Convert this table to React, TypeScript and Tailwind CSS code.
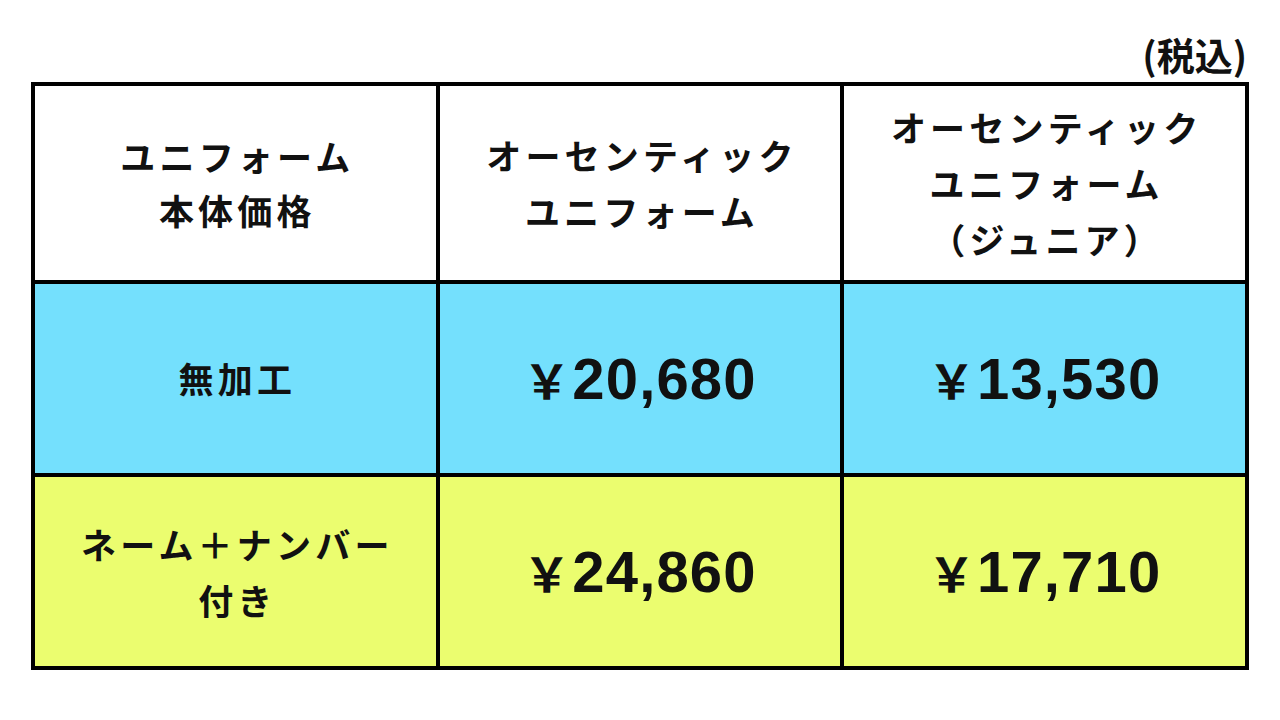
export default function App() {
  const font = { fontFamily: '"Noto Sans CJK JP", "Noto Sans", sans-serif' };

  const Price = ({ value }: { value: string }) => (
    <div className="flex items-baseline justify-center font-bold">
      <span className="text-[47px] mr-[2px]">￥</span>
      <span
        className="text-[58px] tracking-[0.02em]"
        style={{ fontFamily: '"Liberation Sans", Arial, sans-serif' }}
      >
        {value}
      </span>
    </div>
  );

  return (
    <div className="w-[1280px] h-[720px] bg-white text-[#111]" style={font}>
      <div className="px-[31px]">
        {/* tax note */}
        <div className="h-[82px] pt-[31px] flex justify-end pr-[2px]">
          <span className="text-[38px] leading-[46px] font-bold">(税込)</span>
        </div>

        <table className="w-[1218px] border-collapse table-fixed">
          <tbody>
            <tr className="h-[198px] bg-white">
              <td className="border-[4px] border-black text-center align-middle">
                <div className="text-[35px] leading-[54px] font-bold tracking-[0.12em] pl-[4px]">
                  ユニフォーム
                  <br />
                  本体価格
                </div>
              </td>
              <td className="border-[4px] border-black text-center align-middle">
                <div className="text-[35px] leading-[56px] font-bold tracking-[0.12em] pl-[4px]">
                  オーセンティック
                  <br />
                  ユニフォーム
                </div>
              </td>
              <td className="border-[4px] border-black text-center align-middle">
                <div className="text-[35px] leading-[56px] font-bold tracking-[0.12em] pl-[4px]">
                  オーセンティック
                  <br />
                  ユニフォーム
                  <br />
                  （ジュニア）
                </div>
              </td>
            </tr>
            <tr className="h-[193px] bg-[#74e0fd]">
              <td className="border-[4px] border-black text-center align-middle">
                <div className="text-[35px] font-bold tracking-[0.12em] pl-[4px]">無加工</div>
              </td>
              <td className="border-[4px] border-black text-center align-middle">
                <Price value="20,680" />
              </td>
              <td className="border-[4px] border-black text-center align-middle">
                <Price value="13,530" />
              </td>
            </tr>
            <tr className="h-[193px] bg-[#ebfd6f]">
              <td className="border-[4px] border-black text-center align-middle">
                <div className="text-[35px] leading-[56px] font-bold tracking-[0.12em] pl-[4px]">
                  ネーム＋ナンバー
                  <br />
                  付き
                </div>
              </td>
              <td className="border-[4px] border-black text-center align-middle">
                <Price value="24,860" />
              </td>
              <td className="border-[4px] border-black text-center align-middle">
                <Price value="17,710" />
              </td>
            </tr>
          </tbody>
        </table>
      </div>
    </div>
  );
}
